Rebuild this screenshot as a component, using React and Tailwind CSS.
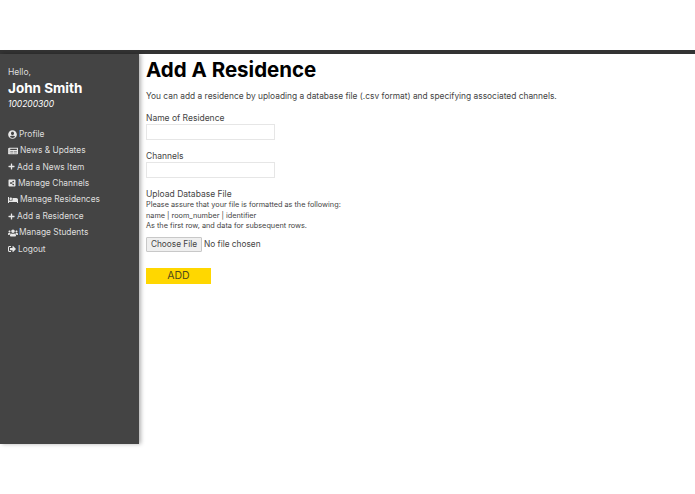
import React from "react";
import { FaUserCircle, FaNewspaper, FaPlus, FaShareAltSquare, FaBed, FaUsers, FaSignOutAlt } from "react-icons/fa";

const items = [
  [FaUserCircle, "Profile", 9, 2],
  [FaNewspaper, "News & Updates", 10, 2],
  [FaPlus, "Add a News Item", 7, 2],
  [FaShareAltSquare, "Manage Channels", 8, 2],
  [FaBed, "Manage Residences", 10, 2],
  [FaPlus, "Add a Residence", 7, 2],
  [FaUsers, "Manage Students", 10, 1],
  [FaSignOutAlt, "Logout", 8, 2],
];

export default function App() {
  return (
    <div className="w-[695px] h-[494px] bg-white overflow-hidden flex flex-col font-['Inter','Liberation_Sans',sans-serif]">
      <div className="h-[50px] shrink-0" />
      <div className="h-1 shrink-0 bg-[#333333]" />
      <div className="h-[390px] shrink-0 flex">
        <aside className="w-[139px] shrink-0 bg-[#444444] text-[#dedede] pl-2 pt-3 shadow-[2px_0_4px_rgba(0,0,0,0.3)]">
          <div className="text-[8.5px] leading-[12px]">Hello,</div>
          <div className="text-[13.5px] leading-[18px] mt-px font-bold text-white">John Smith</div>
          <div className="text-[8.5px] leading-[12px] mt-px italic text-white">100200300</div>
          <nav className="mt-4 flex flex-col">
            {items.map(([Icon, label, size, gap]) => (
              <div key={label} className="h-[16.4px] flex items-center text-[8.4px]" style={{ gap }}>
                <Icon size={size} className="shrink-0 text-[#e8e8e8]" />
                <span>{label}</span>
              </div>
            ))}
          </nav>
        </aside>
        <main className="flex-1 pl-[7px] text-[#444444]">
          <h1 className="text-[20.5px] leading-[26px] mt-[3px] font-bold text-black">Add A Residence</h1>
          <p className="text-[8.4px] leading-[12px] mt-[7px]">You can add a residence by uploading a database file (.csv format) and specifying associated channels.</p>
          <label className="block text-[8.5px] leading-[12px] mt-[10px]">Name of Residence</label>
          <div className="w-[129px] h-4 border border-[#e6e6e6]" />
          <label className="block text-[8.5px] leading-[12px] mt-[10px]">Channels</label>
          <div className="w-[129px] h-4 border border-[#e6e6e6]" />
          <label className="block text-[8.5px] leading-[12px] mt-[10px]">Upload Database File</label>
          <div className="text-[7.3px] leading-[10.5px]">
            <div>Please assure that your file is formatted as the following:</div>
            <div>name | room_number | identifier</div>
            <div>As the first row, and data for subsequent rows.</div>
          </div>
          <div className="flex items-center mt-[5.5px] text-[8.3px]">
            <div className="w-[56px] h-[15px] bg-[#efefef] border border-[#c8c8c8] rounded-[1px] flex items-center justify-center">Choose File</div>
            <span className="ml-[2px]">No file chosen</span>
          </div>
          <div className="w-[65px] h-4 mt-4 bg-[#ffd700] flex items-center justify-center text-[10.5px] text-[#4f4a1c]">ADD</div>
        </main>
      </div>
    </div>
  );
}
